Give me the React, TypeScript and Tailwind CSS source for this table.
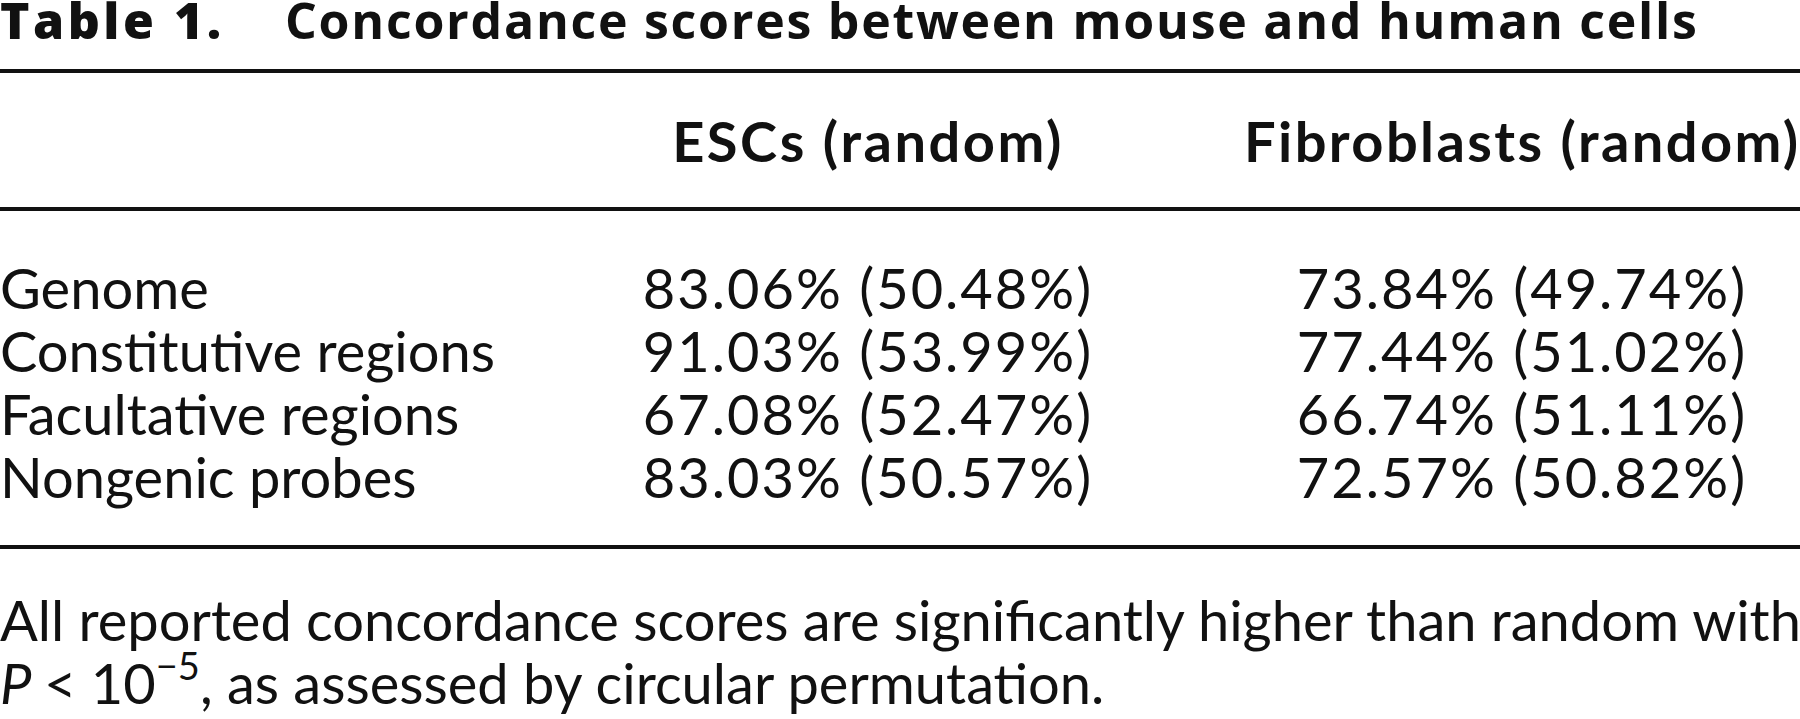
import React from "react";

const rows = [
  { label: "Genome", esc: "83.06% (50.48%)", fib: "73.84% (49.74%)" },
  { label: "Constitutive regions", esc: "91.03% (53.99%)", fib: "77.44% (51.02%)" },
  { label: "Facultative regions", esc: "67.08% (52.47%)", fib: "66.74% (51.11%)" },
  { label: "Nongenic probes", esc: "83.03% (50.57%)", fib: "72.57% (50.82%)" },
];

const gridCols = "grid grid-cols-[492px_752px_556px]";

export default function App() {
  return (
    <div className="w-[1800px] h-[719px] overflow-hidden bg-white text-[#111] font-['Lato',sans-serif]">
      {/* Caption */}
      <div className="h-[41px] text-[50px] leading-[41px] whitespace-nowrap font-['Open_Sans',sans-serif]">
        <span className="inline-block w-[285px] font-extrabold tracking-[3.5px]">Table 1.</span>
        <span className="font-bold tracking-[1.75px]">Concordance scores between mouse and human cells</span>
      </div>

      <div className="mt-[28px] h-[4px] bg-[#111]" />

      {/* Header */}
      <div className={`${gridCols} pt-[40px] pb-[38px] text-[56px] leading-[56px] font-bold`}>
        <div />
        <div className="text-center tracking-[2.5px]">ESCs (random)</div>
        <div className="text-center whitespace-nowrap tracking-[2.4px] pr-[4px]">Fibroblasts (random)</div>
      </div>

      <div className="h-[4px] bg-[#111]" />

      {/* Body */}
      <div className="pt-[45px] pb-[37px] text-[56px] leading-[63px]">
        {rows.map((r) => (
          <div key={r.label} className={gridCols}>
            <div className="whitespace-nowrap">{r.label}</div>
            <div className="text-center tracking-[2px]">{r.esc}</div>
            <div className="text-center tracking-[2px]">{r.fib}</div>
          </div>
        ))}
      </div>

      <div className="h-[4px] bg-[#111]" />

      {/* Footnote */}
      <div className="pt-[39px] text-[56px] leading-[63px] whitespace-nowrap">
        All reported concordance scores are significantly higher than random with
        <br />
        <span className="italic inline-block w-[44px]">P</span>
        {"< 10"}
        <span className="relative -top-[24px] text-[38px] leading-none">{"\u22125"}</span>, as assessed by circular permutation.
      </div>
    </div>
  );
}
